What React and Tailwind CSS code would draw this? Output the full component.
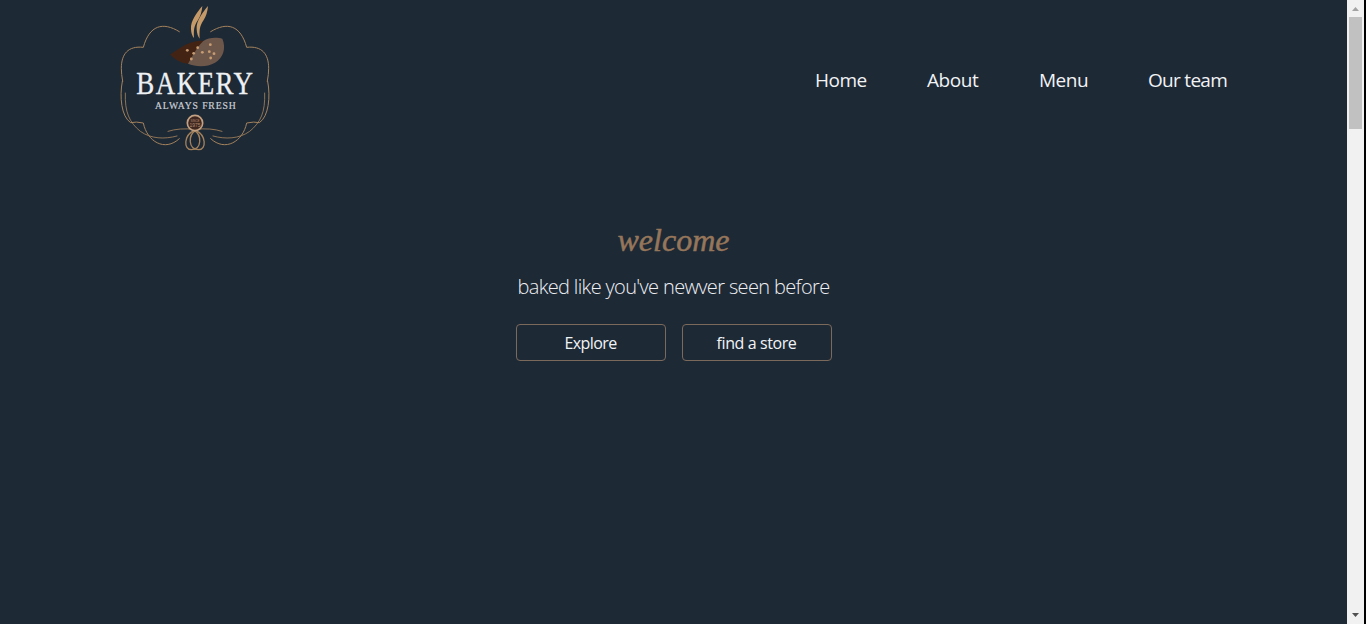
const seeds = [[232, 151], [263, 143], [251, 160], [277, 157], [301, 134], [298, 155], [312, 161], [302, 174], [244, 177]];

function FrameHalf() {
  return (
    <g fill="none" stroke="#a3825c" strokeWidth="3" strokeLinecap="round">
      <path d="M208 95C158 64 118 76 100 142C54 137 34 162 34 205Q34 222 38 244" />
      <path d="M37 244C28 290 34 350 62 368Q78 364 100 369C111 424 164 457 208 416" />
      <path d="M46 279C44 337 58 367 91 394C123 417 164 418 201 408" strokeWidth="2.5" />
      <path d="M174 394Q208 383 253 388" strokeWidth="2.5" />
    </g>
  );
}

function Logo() {
  return (
    <svg className="h-40 w-[170px] shrink-0" viewBox="0 0 510 480" role="img" aria-label="Bakery">
      <FrameHalf />
      <g transform="translate(510 0) scale(-1 1)"><FrameHalf /></g>
      <g fill="#c59a68">
        <path d="M277 18C262 36 241 62 243 88Q244 106 252 114C251 90 251 80 264 60Q275 43 277 18Z" />
        <path d="M294 18C279 36 258 62 260 88Q261 106 269 116C268 90 268 80 281 60Q292 43 294 18Z" />
      </g>
      <path d="M180 163C209 147 230 122 281 122C268 143 254 158 234 191C210 189 196 180 180 163Z" fill="#432414" />
      <path d="M234 191C250 166 257 146 280 123C295 112 321 112 337 116C349 144 340 173 315 188C291 202 257 201 234 191Z" fill="#6d574b" />
      {seeds.map(([x, y]) => <circle key={`${x}-${y}`} cx={x} cy={y} r="4.2" fill="#c79c72" />)}
      <text transform="translate(79 282) scale(.86 1)" textLength="407" lengthAdjust="spacing" fill="#eef1f4" stroke="#eef1f4" strokeWidth="1" fontFamily="'Liberation Serif', serif" fontSize="94">BAKERY</text>
      <text x="135" y="326" textLength="242" lengthAdjust="spacing" fill="#cbd0d5" stroke="#cbd0d5" strokeWidth=".6" fontFamily="'Liberation Serif', serif" fontSize="29">ALWAYS FRESH</text>
      <g fill="none" stroke="#a3825c" strokeWidth="4">
        <path d="M253 391C221 405 220 449 244 449C276 449 276 405 253 391Z" />
        <path d="M257 391C289 405 290 449 266 449C234 449 234 405 257 391Z" />
      </g>
      <circle cx="255" cy="369" r="23" fill="#40271f" stroke="#c3a284" strokeWidth="5" />
      <text x="255" y="365" textAnchor="middle" fill="#b28d70" fontFamily="'Liberation Sans', sans-serif" fontSize="9">SINCE</text>
      <text x="255" y="380" textAnchor="middle" fill="#b28d70" fontFamily="'Liberation Sans', sans-serif" fontSize="15">1975</text>
    </svg>
  );
}

function NavLink({ children, className }) {
  return <a href="#" className={`block whitespace-nowrap ${className}`}>{children}</a>;
}

function ActionButton({ children, className }) {
  return (
    <button className={`h-[37px] w-[150px] rounded border border-[#7b6a5b] pt-px text-base font-medium text-[#f1f3f5] ${className}`}>
      {children}
    </button>
  );
}

function ScrollBar() {
  return (
    <aside className="flex w-[19px] shrink-0 flex-col items-center border-r-2 border-black bg-[#f1f1f1]">
      <svg className="h-[17px] w-[17px] shrink-0" viewBox="0 0 17 17"><path d="M5 11L8.5 7L12 11Z" fill="#a3a3a3" /></svg>
      <div className="h-28 w-[13px] bg-[#c1c1c1]" />
      <svg className="mt-auto h-[17px] w-[17px] shrink-0" viewBox="0 0 17 17"><path d="M5 6L8.5 10L12 6Z" fill="#505050" /></svg>
    </aside>
  );
}

export default function App() {
  return (
    <div className="flex h-[624px] w-full overflow-hidden bg-[#1e2936] font-['Open_Sans','Noto_Sans',sans-serif]">
      <div className="flex min-w-0 grow flex-col">
        <header className="flex h-40 items-center justify-between pr-[119px] pl-[110px]">
          <Logo />
          <nav className="flex gap-[60px] text-[19px] leading-7 text-[#f1f3f5]">
            <NavLink className="w-[52px] tracking-[-0.5px]">Home</NavLink>
            <NavLink className="w-[52px] tracking-[-0.4px]">About</NavLink>
            <NavLink className="w-[49px] tracking-[-0.5px]">Menu</NavLink>
            <NavLink className="w-[80px] tracking-[-0.7px]">Our team</NavLink>
          </nav>
        </header>
        <main className="flex flex-col items-center pt-[58px]">
          <h1 className="h-[52px] font-['Liberation_Serif',serif] text-[32px] leading-[44px] font-medium text-[#96765a] italic [-webkit-text-stroke:0.5px_#96765a]">welcome</h1>
          <p className="h-[54px] text-[20px] leading-[34px] font-light tracking-[-0.64px] whitespace-nowrap text-[#eef0f3]">baked like you've newver seen before</p>
          <div className="flex gap-4">
            <ActionButton className="tracking-[-0.6px]">Explore</ActionButton>
            <ActionButton className="tracking-[-0.4px]">find a store</ActionButton>
          </div>
        </main>
      </div>
      <ScrollBar />
    </div>
  );
}
